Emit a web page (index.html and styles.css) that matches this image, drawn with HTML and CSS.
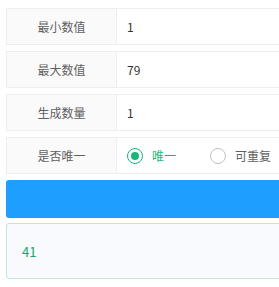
FILE: index.html
```html
<!DOCTYPE html>
<html lang="zh-CN">
<head>
  <meta charset="UTF-8">
  <meta name="viewport" content="width=device-width, initial-scale=1.0">
  <title>随机数生成</title>
  <link rel="stylesheet" href="styles.css">
</head>
<body>
  <form class="gen-form" onsubmit="return false">
    <div class="form-row">
      <label class="form-label" for="min">最小数值</label>
      <input class="form-input" type="text" id="min" value="1" />
    </div>
    <div class="form-row">
      <label class="form-label" for="max">最大数值</label>
      <input class="form-input" type="text" id="max" value="79" />
    </div>
    <div class="form-row">
      <label class="form-label" for="count">生成数量</label>
      <input class="form-input" type="text" id="count" value="1" />
    </div>
    <div class="form-row">
      <span class="form-label">是否唯一</span>
      <div class="form-radios">
        <label class="radio checked"><span class="radio-dot"></span>唯一</label>
        <label class="radio"><span class="radio-dot"></span>可重复</label>
      </div>
    </div>
    <button class="gen-btn" type="submit"></button>
    <div class="result">41</div>
  </form>
</body>
</html>
```

FILE: styles.css
```css
* {
  box-sizing: border-box;
}
html {
  overflow: hidden;
}
body {
  margin: 0;
  padding: 8px 0 0 6px;
  font-family: "Noto Sans CJK SC", "Noto Sans", sans-serif;
  font-size: 12px;
  color: #333;
}
.gen-form {
  width: calc(100% + 30px);
}
.form-row {
  display: flex;
  height: 37px;
  margin-bottom: 6px;
  border: 1px solid #eee;
  background: #fff;
}
.form-label {
  width: 110px;
  flex-shrink: 0;
  display: flex;
  align-items: center;
  justify-content: center;
  background: #fafafa;
  border-right: 1px solid #eee;
  color: #5f5f5f;
}
.form-input {
  flex: 1;
  border: 0;
  padding: 0 10px;
  font: inherit;
  color: #333;
  background: transparent;
  outline: none;
}
.form-radios {
  display: flex;
  align-items: center;
  padding-left: 10px;
}
.radio {
  display: flex;
  align-items: center;
  margin-right: 34px;
  color: #5f5f5f;
}
.radio-dot {
  width: 16px;
  height: 16px;
  margin-right: 9px;
  border: 1px solid #c2c2c2;
  border-radius: 50%;
  position: relative;
}
.radio.checked {
  color: #16b777;
}
.radio.checked .radio-dot {
  border-color: #16b777;
}
.radio.checked .radio-dot::after {
  content: "";
  position: absolute;
  top: 3px;
  left: 3px;
  width: 8px;
  height: 8px;
  border-radius: 50%;
  background: #16b777;
}
.gen-btn {
  display: block;
  width: 100%;
  height: 38px;
  margin: 0 0 5px;
  border: 0;
  border-radius: 3px;
  background: #1e9fff;
}
.result {
  height: 56px;
  display: flex;
  align-items: center;
  padding-left: 15px;
  border: 1px solid #c6e3d6;
  border-radius: 3px;
  background: #f8fafd;
  color: #16a56b;
  font-size: 13px;
}
```
